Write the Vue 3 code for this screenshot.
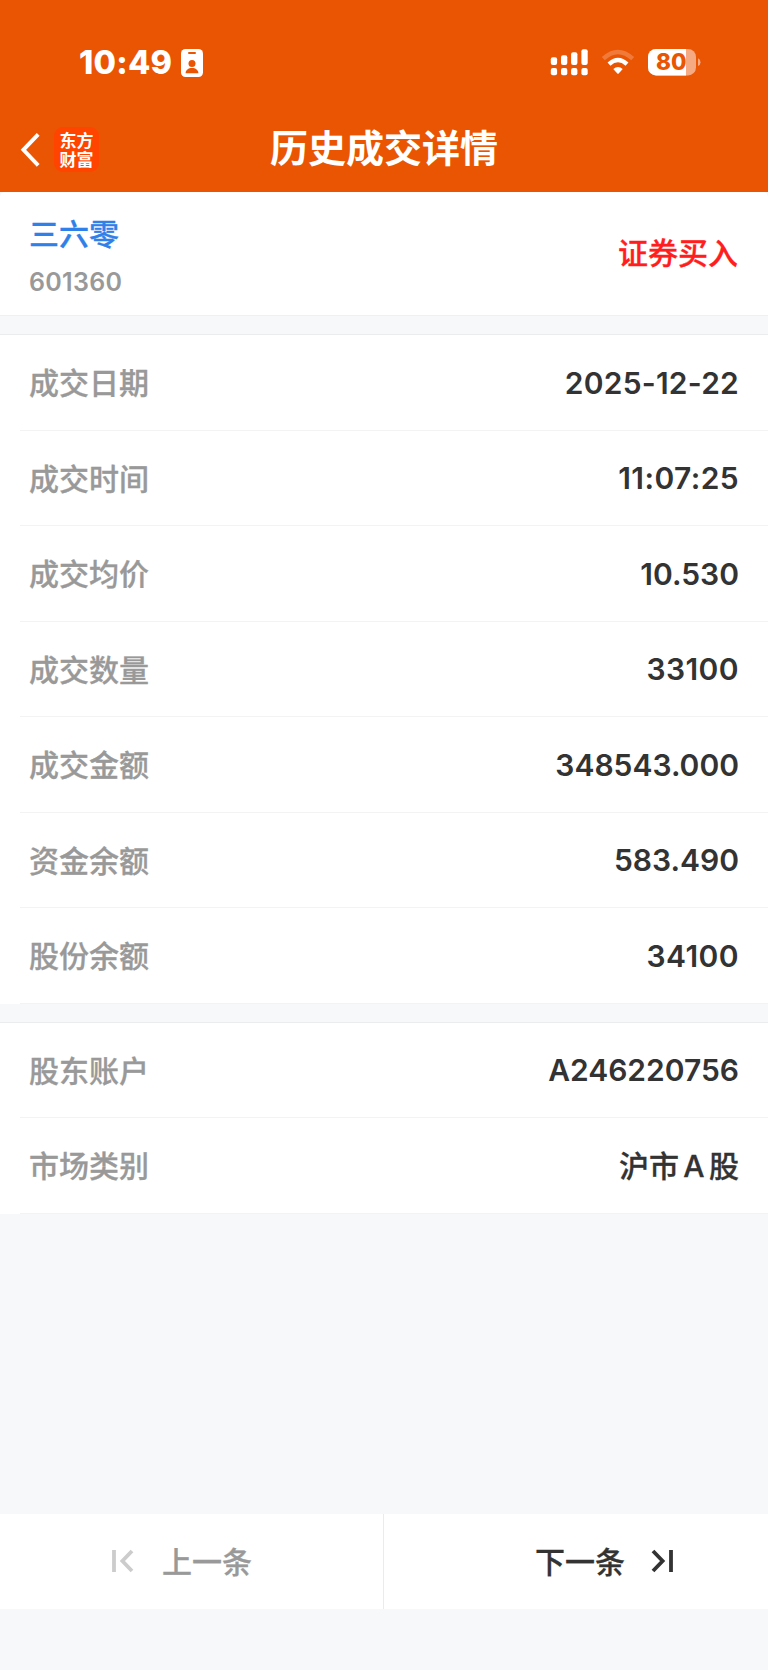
<script setup>
const groups = [
  [
    { label: '成交日期', value: '2025-12-22', kind: 'date' },
    { label: '成交时间', value: '11:07:25', kind: 'spaced' },
    { label: '成交均价', value: '10.530' },
    { label: '成交数量', value: '33100', kind: 'spaced' },
    { label: '成交金额', value: '348543.000' },
    { label: '资金余额', value: '583.490' },
    { label: '股份余额', value: '34100', kind: 'spaced' },
  ],
  [
    { label: '股东账户', value: 'A246220756' },
    { label: '市场类别', value: '沪市 A 股', kind: 'cjk' },
  ],
]
</script>

<template>
  <div class="page">
    <header class="header">
      <div class="status">
        <div class="clock">
          <span class="time">10:49</span>
          <svg class="badge" width="22" height="28" viewBox="0 0 22 28">
            <rect width="22" height="28" rx="4.5" fill="#fff" />
            <rect x="7" y="3" width="8" height="2" rx="1" fill="#ea5503" />
            <circle cx="11" cy="14.5" r="3.5" fill="#ea5503" />
            <path d="M4.6 24.3c0-3.2 2.8-5.2 6.4-5.2s6.4 2 6.4 5.2z" fill="#ea5503" />
          </svg>
        </div>
        <svg class="indicators" width="152" height="28" viewBox="550 48 152 28">
          <g fill="#fff">
            <rect x="550.8" y="57.2" width="6.3" height="7.8" rx="2" />
            <rect x="561" y="55.3" width="6.3" height="9.7" rx="2" />
            <rect x="571.1" y="52.2" width="6.3" height="12.8" rx="2" />
            <rect x="581.4" y="49.2" width="6.3" height="15.8" rx="2" />
            <rect x="550.8" y="68" width="6.3" height="7.3" rx="2" />
            <rect x="561" y="68" width="6.3" height="7.3" rx="2" />
            <rect x="571.1" y="68" width="6.3" height="7.3" rx="2" />
            <rect x="581.4" y="68" width="6.3" height="7.3" rx="2" />
          </g>
          <path d="M603.3 58.7Q617.9 45.3 632.7 58.7" fill="none" stroke="#f07a3a" stroke-width="4.4" />
          <path d="M609 64.1Q618 56 627 64.1" fill="none" stroke="#fff" stroke-width="4.3" />
          <path d="M613.3 69Q618 64.8 622.7 69L618.7 73.5Q618 74.1 617.3 73.5Z" fill="#fff" />
          <rect x="648" y="49" width="48" height="26.4" rx="8" fill="#f6aa83" />
          <path d="M656 49H686V75.4H656A8 8 0 0 1 648 67.4V57A8 8 0 0 1 656 49Z" fill="#fff" />
          <path d="M698 58.3Q700.5 59.3 700.5 62.2Q700.5 65 698 66Z" fill="#f6aa83" />
          <text class="charge" x="671.2" y="70.4" text-anchor="middle">80</text>
        </svg>
      </div>
      <nav class="nav">
        <div class="nav-left">
          <svg width="20" height="34" viewBox="0 0 20 34">
            <path d="M18.2 1.3L3.4 16.8L18.2 32.4" fill="none" stroke="#fff" stroke-width="3.9" />
          </svg>
          <div class="logo"><span>东方</span><span>财富</span></div>
        </div>
        <h1 class="title">历史成交详情</h1>
      </nav>
    </header>

    <section class="stock">
      <div>
        <div class="name">三六零</div>
        <div class="code">601360</div>
      </div>
      <div class="side">证券买入</div>
    </section>

    <section v-for="(rows, i) in groups" :key="i" class="group">
      <div v-for="row in rows" :key="row.label" class="row">
        <span class="label">{{ row.label }}</span>
        <span class="value" :class="row.kind">{{ row.value }}</span>
      </div>
    </section>

    <footer class="pager">
      <div class="prev">
        <svg width="22" height="24" viewBox="0 0 22 24">
          <path d="M2 1V23M20 2L10.4 12L20 22" fill="none" stroke="#ccc" stroke-width="3.8" />
        </svg>
        <span>上一条</span>
      </div>
      <div class="next">
        <span>下一条</span>
        <svg width="22" height="24" viewBox="0 0 22 24">
          <path d="M20 1V23M2 2L11.6 12L2 22" fill="none" stroke="#333" stroke-width="3.8" />
        </svg>
      </div>
    </footer>
  </div>
</template>

<style>
body {
  margin: 0;
  background: #f7f8fa;
}
</style>

<style scoped>
.page {
  display: flex;
  flex-direction: column;
  width: 768px;
  height: 1670px;
  background: #f7f8fa;
  font-family: Inter, "Noto Sans CJK SC", sans-serif;
  font-weight: 500;
  color: #333;
}
.header {
  height: 192px;
  flex: none;
  background: #ea5503;
  color: #fff;
}
.status {
  height: 104px;
  box-sizing: border-box;
  padding: 48px 66px 0 79px;
  display: flex;
  justify-content: space-between;
  align-items: flex-start;
}
.clock {
  display: flex;
  align-items: center;
}
.time {
  width: 102px;
  padding-top: 1px;
  line-height: 28px;
  font-size: 32.5px;
  font-weight: 800;
  letter-spacing: 0.2px;
}
.indicators {
  display: block;
}
.charge {
  font: 800 22.5px Inter, sans-serif;
  fill: #ea5503;
}
.nav {
  display: grid;
  grid-template-columns: 1fr auto 1fr;
  align-items: center;
  height: 88px;
}
.nav-left {
  display: flex;
  align-items: center;
  padding-left: 20px;
  gap: 14px;
  padding-top: 3px;
}
.logo {
  width: 45px;
  height: 45px;
  box-sizing: border-box;
  padding-top: 3px;
  border-radius: 9px;
  background: #ff4400;
  display: flex;
  flex-direction: column;
  align-items: center;
}
.logo span {
  font: 700 17px/19px "Noto Sans CJK SC", sans-serif;
}
.title {
  margin: 0;
  font-size: 38px;
  line-height: 88px;
  font-weight: 700;
}
.stock {
  height: 124px;
  flex: none;
  box-sizing: border-box;
  padding: 0 30px 0 29px;
  display: flex;
  justify-content: space-between;
  align-items: center;
  background: #fff;
  border-bottom: 1px solid #f0f0f2;
  border-radius: 5px 5px 0 0;
}
.name,
.side,
.label,
.value.cjk,
.pager span {
  -webkit-text-stroke: 0.3px currentColor;
}
.name {
  margin-top: 6px;
  font-size: 30px;
  line-height: 44px;
  color: #2f80e8;
}
.code {
  margin-top: 6px;
  font-size: 25px;
  font-weight: 600;
  line-height: 40px;
  letter-spacing: 0.3px;
  color: #999;
}
.side {
  margin-bottom: 5px;
  font-size: 30px;
  color: #ff1d1d;
}
.group {
  flex: none;
  margin-top: 18px;
  border-top: 1px solid #ebecee;
  background: #fff;
}
.row {
  height: 95.5px;
  box-sizing: border-box;
  margin-left: 20px;
  padding: 0 29px 0 9px;
  border-bottom: 1px solid #f3f3f4;
  display: flex;
  justify-content: space-between;
  align-items: center;
  font-size: 30px;
}
.label {
  margin-bottom: 2px;
  color: #999;
}
.value {
  padding-top: 1px;
  font-weight: 600;
}
.value.spaced {
  letter-spacing: 0.4px;
}
.value.date {
  letter-spacing: 0.22px;
}
.value.cjk {
  padding-top: 0;
  margin-bottom: 2px;
  font-weight: 500;
  word-spacing: -3.6px;
}
.pager {
  flex: none;
  display: flex;
  height: 95.5px;
  margin-top: auto;
  margin-bottom: 61px;
  background: #fff;
  font-size: 30px;
}
.pager span {
  margin-bottom: 2px;
}
.prev,
.next {
  flex: none;
  width: 384px;
  display: flex;
  align-items: center;
  box-sizing: border-box;
}
.prev {
  padding-left: 112px;
  color: #999;
  border-right: 1px solid #ebebed;
  gap: 28px;
}
.next {
  justify-content: flex-end;
  padding-right: 95px;
  gap: 26px;
}
</style>
